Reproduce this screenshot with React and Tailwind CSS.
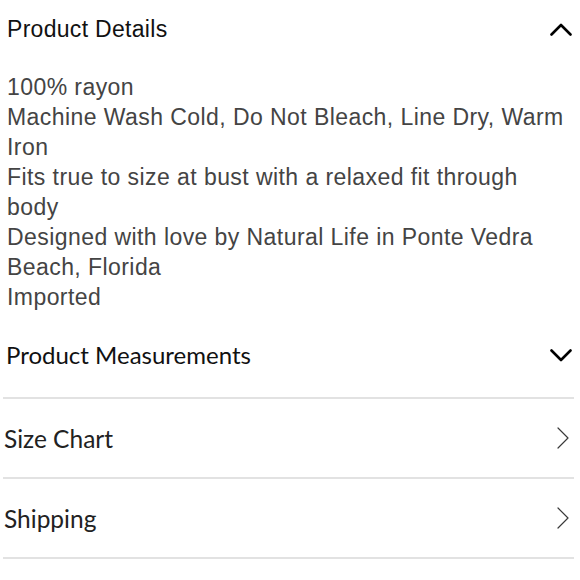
import React from "react";

function ChevronUp() {
  return (
    <svg width="22" height="13" viewBox="0 0 22 13" fill="none">
      <polyline points="1.5,11.5 11,2 20.5,11.5" stroke="#000" strokeWidth="2.6" strokeLinecap="round" strokeLinejoin="round" />
    </svg>
  );
}
function ChevronDown() {
  return (
    <svg width="22" height="13" viewBox="0 0 22 13" fill="none">
      <polyline points="1.5,1.5 11,11 20.5,1.5" stroke="#000" strokeWidth="2.6" strokeLinecap="round" strokeLinejoin="round" />
    </svg>
  );
}
function ChevronRight() {
  return (
    <svg width="12" height="22" viewBox="0 0 12 22" fill="none">
      <polyline points="1,1 11,11 1,21" stroke="#3a3a3a" strokeWidth="1.2" strokeLinecap="round" strokeLinejoin="round" />
    </svg>
  );
}

export default function App() {
  const helv = { fontFamily: '"Liberation Sans", Arial, sans-serif' };
  const geo = { fontFamily: 'Lato, "Open Sans", sans-serif' };
  return (
    <div className="w-[580px] h-[580px] bg-white pl-[3px] pr-[6px] overflow-hidden">
      <div className="pt-[14px] h-[44px] flex items-center justify-between pl-[4px] pr-[2px]">
        <span className="text-[23px] tracking-[0.3px] leading-[30px] text-[#111]" style={helv}>Product Details</span>
        <ChevronUp />
      </div>
      <div className="mt-[28px] pl-[4px] pr-[2px] text-[23px] tracking-[0.43px] leading-[30px] text-[#444]" style={helv}>
        <div>100% rayon</div>
        <div>Machine Wash Cold, Do Not Bleach, Line Dry, Warm Iron</div>
        <div>Fits true to size at bust with a relaxed fit through body</div>
        <div>Designed with love by Natural Life in Ponte Vedra Beach, Florida</div>
        <div>Imported</div>
      </div>
      <div className="mt-[28px] h-[30px] flex items-center justify-between pl-[3px] pr-[2px]">
        <span className="text-[24px] leading-[30px] text-[#111]" style={geo}>Product Measurements</span>
        <ChevronDown />
      </div>
      <div className="mt-[27px] h-[2px] bg-[#e2e2e2]" />
      <div className="h-[78px] flex items-center justify-between pl-[1px] pr-[5px]">
        <span className="text-[24.5px] text-[#222] translate-y-[1px]" style={geo}>Size Chart</span>
        <ChevronRight />
      </div>
      <div className="h-[2px] bg-[#e2e2e2]" />
      <div className="h-[78px] flex items-center justify-between pl-[1px] pr-[5px]">
        <span className="text-[24.5px] text-[#222] translate-y-[1px]" style={geo}>Shipping</span>
        <ChevronRight />
      </div>
      <div className="h-[2px] bg-[#e2e2e2]" />
    </div>
  );
}
